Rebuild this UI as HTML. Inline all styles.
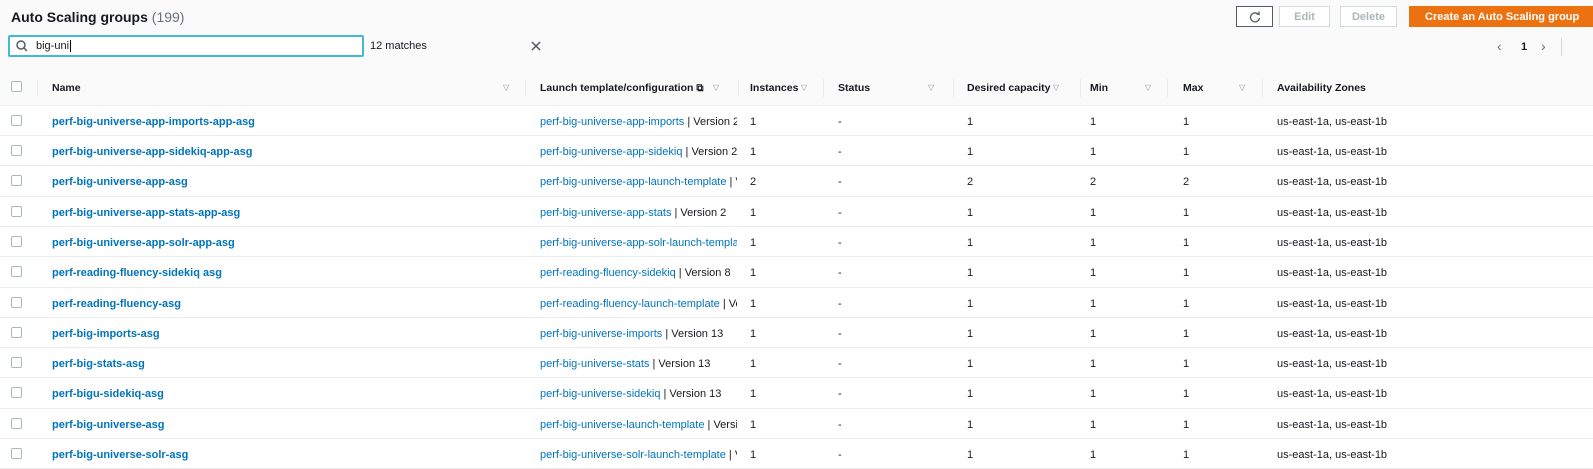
<!DOCTYPE html>
<html><head><style>
body{margin:0;width:1593px;height:467px;overflow:hidden;background:#fafafa;font-family:"Liberation Sans",sans-serif;font-size:11px;color:#16191f;position:relative}
.a{position:absolute;white-space:nowrap}
.btn{position:absolute;top:6px;height:21px;border:1px solid #d5dbdb;background:#fff;color:#aab7b8;font-weight:bold;font-size:11px;line-height:20px;text-align:center;box-sizing:border-box}
.hdr{position:absolute;left:0;top:70px;width:1593px;height:35px;background:#fafafa;border-bottom:1px solid #eaeded;font-weight:bold;font-size:10.5px}
.row{position:absolute;left:0;width:1593px;height:29px;background:#fff;border-bottom:1px solid #eaeded}
.row span,.hdr span{position:absolute;top:10px;white-space:nowrap}
.hdr span{top:12px}
.hdr .s{font-size:8px;color:#879596;font-weight:normal;top:13px}
.hdr .d{top:9px;height:18px;border-right:1px solid #eaeded}
.cb{width:9px;height:9px;border:1px solid #aab7b8;border-radius:2px;background:#fff;left:11px}
.row .cb{top:9px}
.hdr .cb{top:11px}
.n{color:#0073bb;font-weight:bold;left:52px}
.lt{left:540px;width:197px;overflow:hidden}
.l{color:#0073bb}
</style></head><body>
<div class="a" style="left:11px;top:9px;font-size:14px;font-weight:bold">Auto Scaling groups <span style="font-weight:normal;color:#687078">(199)</span></div>
<div class="a" style="left:8px;top:35px;width:356px;height:22px;border:2px solid #44b9d6;border-radius:2px;background:#fff;box-sizing:border-box"></div>
<svg class="a" style="left:16px;top:40px" width="12" height="12"><circle cx="5" cy="5" r="4" fill="none" stroke="#545b64" stroke-width="1.5"/><line x1="8" y1="8" x2="11" y2="11" stroke="#545b64" stroke-width="1.5"/></svg>
<div class="a" style="left:36px;top:40px">big-uni<span style="border-left:1px solid #000;margin-left:1px"></span></div>
<svg class="a" style="left:531px;top:41px" width="10" height="10"><path d="M1 1L9 9M9 1L1 9" stroke="#545b64" stroke-width="1.5"/></svg>
<div class="a" style="left:370px;top:40px">12 matches</div>
<div class="btn" style="left:1236px;width:37px;border-color:#545b64"><svg width="12" height="12" style="margin-top:4px"><path d="M9.5 3.5A4.5 4.5 0 1 0 10.5 7" fill="none" stroke="#545b64" stroke-width="1.3"/><path d="M7 2.5L10 3.5L10 0.5" fill="none" stroke="#545b64" stroke-width="1.3"/></svg></div>
<div class="btn" style="left:1279px;width:51px">Edit</div>
<div class="btn" style="left:1340px;width:57px">Delete</div>
<div class="btn" style="left:1409px;width:184px;background:#ec7211;border-color:#ec7211;color:#fff;text-align:left;padding-left:15px">Create an Auto Scaling group</div>
<div class="a" style="left:1497px;top:38px;color:#687078;font-size:14px">&#x2039;</div>
<div class="a" style="left:1521px;top:41px;font-weight:bold">1</div>
<div class="a" style="left:1541px;top:38px;color:#687078;font-size:14px">&#x203A;</div>
<div class="a" style="left:1561px;top:38px;height:18px;border-left:1px solid #d5dbdb"></div>

<div class="hdr">
<span class="cb"></span><span class="d" style="left:37px"></span>
<span style="left:52px">Name</span><span class="s" style="left:503px">&#9661;</span><span class="d" style="left:525px"></span>
<span style="left:540px">Launch template/configuration <span style="position:static;font-size:10px">&#x29C9;</span></span><span class="s" style="left:713px">&#9661;</span><span class="d" style="left:738px"></span>
<span style="left:750px">Instances</span><span class="s" style="left:801px">&#9661;</span><span class="d" style="left:823px"></span>
<span style="left:838px">Status</span><span class="s" style="left:928px">&#9661;</span><span class="d" style="left:953px"></span>
<span style="left:967px">Desired capacity</span><span class="s" style="left:1053px">&#9661;</span><span class="d" style="left:1080px"></span>
<span style="left:1090px">Min</span><span class="s" style="left:1145px">&#9661;</span><span class="d" style="left:1167px"></span>
<span style="left:1183px">Max</span><span class="s" style="left:1239px">&#9661;</span><span class="d" style="left:1262px"></span>
<span style="left:1277px">Availability Zones</span>
</div>

<div class="row" style="top:106px"><span class="cb"></span><span class="n">perf-big-universe-app-imports-app-asg</span><span class="lt"><span class="l" style="position:static">perf-big-universe-app-imports</span> | Version 2</span><span style="left:750px">1</span><span style="left:838px">-</span><span style="left:967px">1</span><span style="left:1090px">1</span><span style="left:1183px">1</span><span style="left:1277px">us-east-1a, us-east-1b</span></div>
<div class="row" style="top:136px"><span class="cb"></span><span class="n">perf-big-universe-app-sidekiq-app-asg</span><span class="lt"><span class="l" style="position:static">perf-big-universe-app-sidekiq</span> | Version 2</span><span style="left:750px">1</span><span style="left:838px">-</span><span style="left:967px">1</span><span style="left:1090px">1</span><span style="left:1183px">1</span><span style="left:1277px">us-east-1a, us-east-1b</span></div>
<div class="row" style="top:166px;height:30px"><span class="cb"></span><span class="n">perf-big-universe-app-asg</span><span class="lt"><span class="l" style="position:static">perf-big-universe-app-launch-template</span> | Version</span><span style="left:750px">2</span><span style="left:838px">-</span><span style="left:967px">2</span><span style="left:1090px">2</span><span style="left:1183px">2</span><span style="left:1277px">us-east-1a, us-east-1b</span></div>
<div class="row" style="top:197px"><span class="cb"></span><span class="n">perf-big-universe-app-stats-app-asg</span><span class="lt"><span class="l" style="position:static">perf-big-universe-app-stats</span> | Version 2</span><span style="left:750px">1</span><span style="left:838px">-</span><span style="left:967px">1</span><span style="left:1090px">1</span><span style="left:1183px">1</span><span style="left:1277px">us-east-1a, us-east-1b</span></div>
<div class="row" style="top:227px"><span class="cb"></span><span class="n">perf-big-universe-app-solr-app-asg</span><span class="lt"><span class="l" style="position:static">perf-big-universe-app-solr-launch-template</span></span><span style="left:750px">1</span><span style="left:838px">-</span><span style="left:967px">1</span><span style="left:1090px">1</span><span style="left:1183px">1</span><span style="left:1277px">us-east-1a, us-east-1b</span></div>
<div class="row" style="top:257px;height:30px"><span class="cb"></span><span class="n">perf-reading-fluency-sidekiq asg</span><span class="lt"><span class="l" style="position:static">perf-reading-fluency-sidekiq</span> | Version 8</span><span style="left:750px">1</span><span style="left:838px">-</span><span style="left:967px">1</span><span style="left:1090px">1</span><span style="left:1183px">1</span><span style="left:1277px">us-east-1a, us-east-1b</span></div>
<div class="row" style="top:288px"><span class="cb"></span><span class="n">perf-reading-fluency-asg</span><span class="lt"><span class="l" style="position:static">perf-reading-fluency-launch-template</span> | Version</span><span style="left:750px">1</span><span style="left:838px">-</span><span style="left:967px">1</span><span style="left:1090px">1</span><span style="left:1183px">1</span><span style="left:1277px">us-east-1a, us-east-1b</span></div>
<div class="row" style="top:318px"><span class="cb"></span><span class="n">perf-big-imports-asg</span><span class="lt"><span class="l" style="position:static">perf-big-universe-imports</span> | Version 13</span><span style="left:750px">1</span><span style="left:838px">-</span><span style="left:967px">1</span><span style="left:1090px">1</span><span style="left:1183px">1</span><span style="left:1277px">us-east-1a, us-east-1b</span></div>
<div class="row" style="top:348px"><span class="cb"></span><span class="n">perf-big-stats-asg</span><span class="lt"><span class="l" style="position:static">perf-big-universe-stats</span> | Version 13</span><span style="left:750px">1</span><span style="left:838px">-</span><span style="left:967px">1</span><span style="left:1090px">1</span><span style="left:1183px">1</span><span style="left:1277px">us-east-1a, us-east-1b</span></div>
<div class="row" style="top:378px;height:30px"><span class="cb"></span><span class="n">perf-bigu-sidekiq-asg</span><span class="lt"><span class="l" style="position:static">perf-big-universe-sidekiq</span> | Version 13</span><span style="left:750px">1</span><span style="left:838px">-</span><span style="left:967px">1</span><span style="left:1090px">1</span><span style="left:1183px">1</span><span style="left:1277px">us-east-1a, us-east-1b</span></div>
<div class="row" style="top:409px"><span class="cb"></span><span class="n">perf-big-universe-asg</span><span class="lt"><span class="l" style="position:static">perf-big-universe-launch-template</span> | Version</span><span style="left:750px">1</span><span style="left:838px">-</span><span style="left:967px">1</span><span style="left:1090px">1</span><span style="left:1183px">1</span><span style="left:1277px">us-east-1a, us-east-1b</span></div>
<div class="row" style="top:439px"><span class="cb"></span><span class="n">perf-big-universe-solr-asg</span><span class="lt"><span class="l" style="position:static">perf-big-universe-solr-launch-template</span> | Version</span><span style="left:750px">1</span><span style="left:838px">-</span><span style="left:967px">1</span><span style="left:1090px">1</span><span style="left:1183px">1</span><span style="left:1277px">us-east-1a, us-east-1b</span></div>
</body></html>
